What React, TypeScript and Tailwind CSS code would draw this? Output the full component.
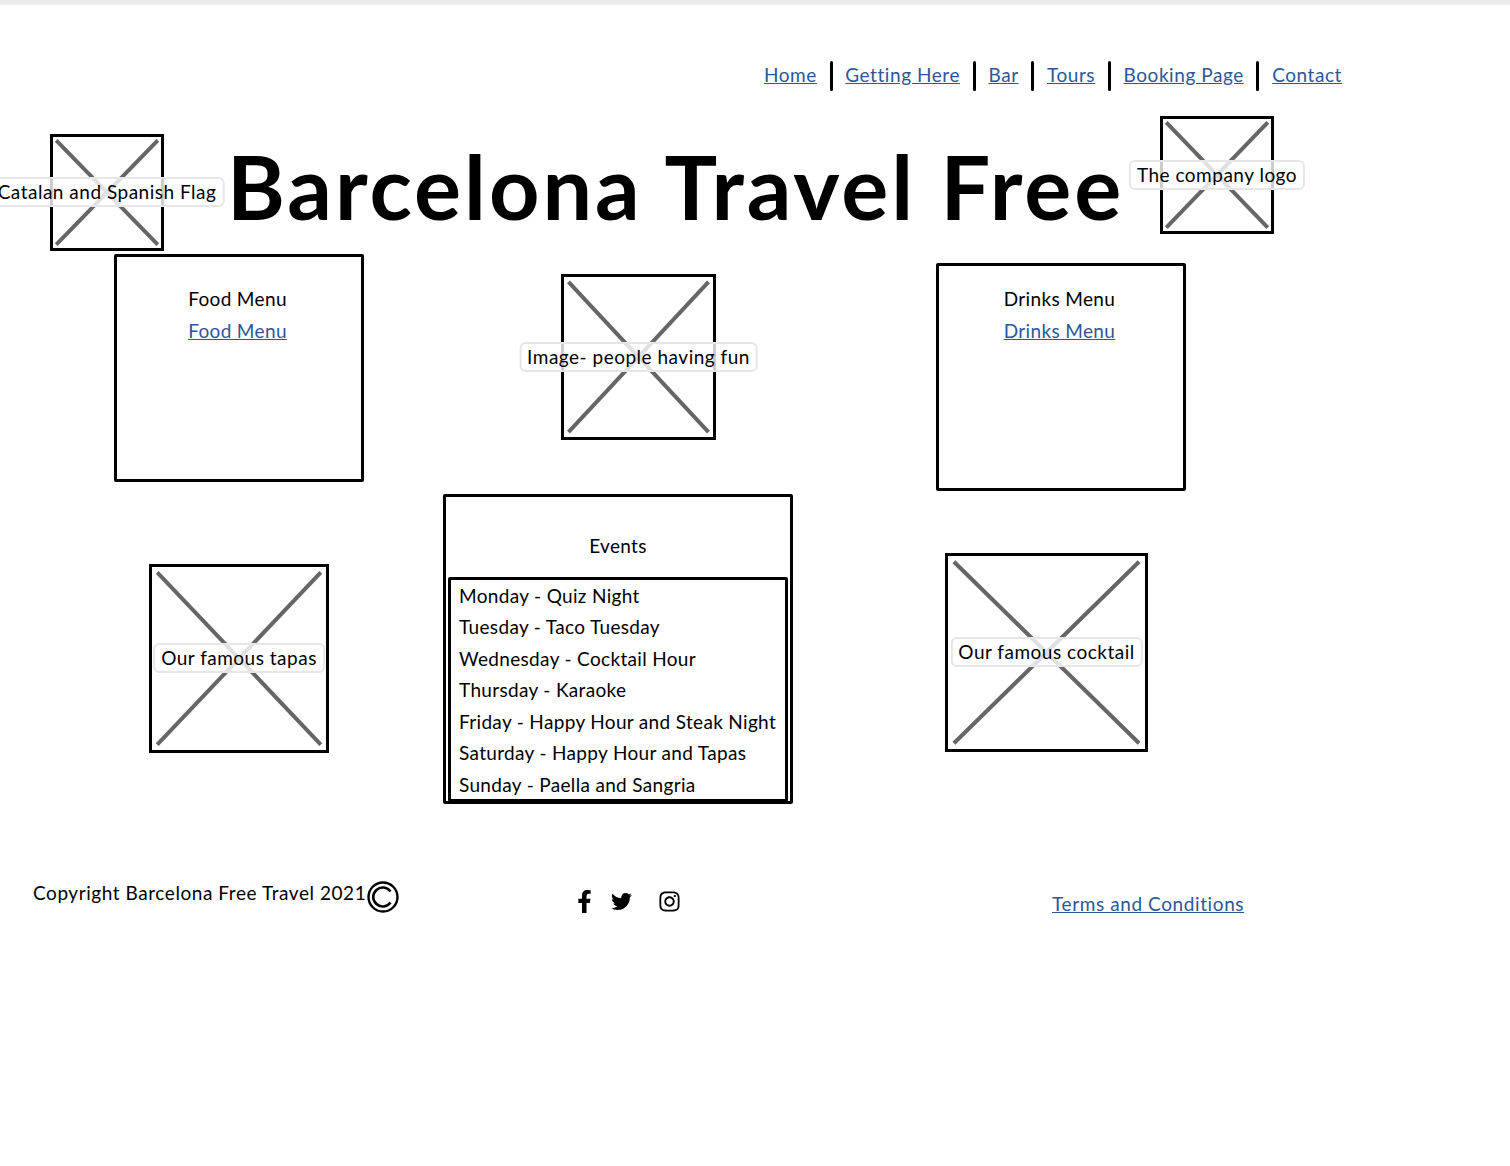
import React from 'react';
import { FaFacebookF, FaTwitter, FaInstagram } from 'react-icons/fa';

const navLinks = ['Home', 'Getting Here', 'Bar', 'Tours', 'Booking Page', 'Contact'];

const events = [
  'Monday - Quiz Night',
  'Tuesday - Taco Tuesday',
  'Wednesday - Cocktail Hour',
  'Thursday - Karaoke',
  'Friday - Happy Hour and Steak Night',
  'Saturday - Happy Hour and Tapas',
  'Sunday - Paella and Sangria',
];

// Wireframe image placeholder: crossed box with a translucent label on top
const Placeholder = ({ label, className }: { label: string; className: string }) => (
  <div className={`relative shrink-0 border-[3px] border-black ${className}`}>
    <svg className="absolute inset-0 h-full w-full" viewBox="0 0 100 100" preserveAspectRatio="none">
      <path
        d="M3 3 L97 97 M97 3 L3 97"
        stroke="#666666"
        strokeWidth="4"
        vectorEffect="non-scaling-stroke"
        fill="none"
      />
    </svg>
    <div className="absolute left-1/2 top-[calc(50%-0.5px)] -translate-x-1/2 -translate-y-1/2 whitespace-nowrap rounded-md border-2 border-[#e6e6e6] bg-white/80 px-[6px] text-[19px] leading-[26px] tracking-[0.5px] text-black">
      {label}
    </div>
  </div>
);

const MenuCard = ({ title, className }: { title: string; className: string }) => (
  <div className={`h-[228px] w-[250px] rounded-[2px] border-[3px] border-black pr-[3px] text-center ${className}`}>
    <p className="text-[19px] leading-[31.5px] tracking-[0.35px] text-black">{title}</p>
    <a href="#" className="text-[19px] leading-[31.5px] tracking-[0.35px] text-[#2b5797] underline">
      {title}
    </a>
  </div>
);

const App: React.FC = () => {
  return (
    <div className="h-[1166px] w-[1510px] overflow-hidden bg-white font-['Lato','Liberation_Sans',sans-serif] text-black">
      <div className="h-[5px] bg-[#ececec]" />

      {/* Nav */}
      <nav className="ml-[764px] mt-[56px] flex h-[30px] items-center">
        {navLinks.map((link, i) => (
          <React.Fragment key={link}>
            {i > 0 && <span className="mx-[12.7px] h-[30px] w-[3px] rounded-full bg-black" />}
            <a href="#" className="whitespace-nowrap pb-[2px] text-[19px] leading-[28px] tracking-[0.56px] text-[#2b5797] underline">
              {link}
            </a>
          </React.Fragment>
        ))}
      </nav>

      {/* Header */}
      <header className="mt-[25px] flex h-[138px] items-start pl-[50px]">
        <Placeholder label="Catalan and Spanish Flag" className="mt-[18px] h-[117px] w-[114px]" />
        <h1 className="ml-[63px] mt-[20px] w-[933px] whitespace-nowrap text-[88px] font-bold leading-[100px] tracking-[3px]">
          Barcelona Travel Free
        </h1>
        <Placeholder label="The company logo" className="h-[118px] w-[114px]" />
      </header>

      {/* Main columns */}
      <main className="flex items-start">
        <section className="ml-[114px] w-[250px]">
          <MenuCard title="Food Menu" className="pt-[26px]" />
          <Placeholder label="Our famous tapas" className="ml-[35px] mt-[82px] h-[189px] w-[180px]" />
        </section>

        <section className="ml-[79px] w-[350px]">
          <Placeholder label="Image- people having fun" className="ml-[118px] mt-[20px] h-[166px] w-[155px]" />
          <div className="mt-[54px] h-[310px] rounded-[2px] border-[3px] border-black">
            <p className="pt-[33px] text-center text-[19px] leading-[31.5px] tracking-[0.35px]">Events</p>
            <ul className="ml-[2px] mt-[15px] h-[225px] w-[340px] rounded-[2px] border-[3px] border-black pl-[8px]">
              {events.map((event) => (
                <li key={event} className="whitespace-nowrap text-[19px] leading-[31.5px] tracking-[0.33px]">
                  {event}
                </li>
              ))}
            </ul>
          </div>
        </section>

        <section className="ml-[143px] w-[250px]">
          <MenuCard title="Drinks Menu" className="mt-[9px] pt-[17px]" />
          <Placeholder label="Our famous cocktail" className="ml-[9px] mt-[62px] h-[199px] w-[203px]" />
        </section>
      </main>

      {/* Footer */}
      <footer className="mt-[77px] flex items-start pl-[33px]">
        <p className="-mt-[1px] w-[334px] whitespace-nowrap text-[19px] leading-[26px] tracking-[0.56px]">
          Copyright Barcelona Free Travel 2021
        </p>
        <svg className="h-[32px] w-[32px] shrink-0" viewBox="0 0 32 32" fill="none" stroke="#000000">
          <circle cx="16" cy="16" r="14.5" strokeWidth="2.4" />
          <path d="M23.5 10.5 A9.5 9.5 0 1 0 23.5 21.5" strokeWidth="2.6" />
        </svg>
        <div className="ml-[174px] mt-[9px] flex items-center">
          <FaFacebookF className="h-[23px] w-[23px]" />
          <FaTwitter className="ml-[15px] h-[21px] w-[21px]" />
          <FaInstagram className="ml-[26px] h-[23px] w-[23px]" />
        </div>
        <a href="#" className="ml-[371px] mt-[10px] whitespace-nowrap text-[19px] leading-[26px] tracking-[0.6px] text-[#2b5797] underline">
          Terms and Conditions
        </a>
      </footer>
    </div>
  );
};

export default App;
